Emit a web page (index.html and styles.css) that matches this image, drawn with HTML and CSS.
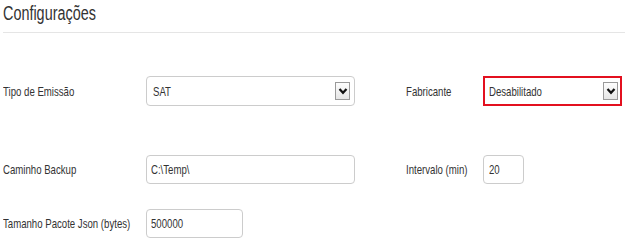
FILE: index.html
```html
<!DOCTYPE html>
<html lang="pt-BR">
<head>
<meta charset="utf-8">
<title>Configurações</title>
<link rel="stylesheet" href="styles.css">
</head>
<body>
<div class="page">
  <h1 class="title"><span class="nt nt-title">Configurações</span></h1>
  <div class="form">
    <div class="row row-1">
      <label class="label"><span class="nt">Tipo de Emissão</span></label>
      <div class="field select w-wide"><span class="value nt">SAT</span><span class="arrow"><svg viewBox="0 0 10 8" width="10" height="8"><path d="M1.5 2 L5 5.8 L8.5 2" fill="none" stroke="#111" stroke-width="2.2"/></svg></span></div>
      <label class="label label-2"><span class="nt">Fabricante</span></label>
      <div class="field select w-fab alert"><span class="value nt">Desabilitado</span><span class="arrow"><svg viewBox="0 0 10 8" width="10" height="8"><path d="M1.5 2 L5 5.8 L8.5 2" fill="none" stroke="#111" stroke-width="2.2"/></svg></span></div>
    </div>
    <div class="row row-2">
      <label class="label"><span class="nt">Caminho Backup</span></label>
      <div class="field input w-wide"><span class="value nt">C:\Temp\</span></div>
      <label class="label label-2"><span class="nt">Intervalo (min)</span></label>
      <div class="field input w-small"><span class="value nt">20</span></div>
    </div>
    <div class="row row-3">
      <label class="label"><span class="nt">Tamanho Pacote Json (bytes)</span></label>
      <div class="field input w-mid"><span class="value nt">500000</span></div>
    </div>
  </div>
</div>
</body>
</html>
```
FILE: styles.css
```css
html, body {
  margin: 0;
  padding: 0;
  background: #fff;
}
.page {
  font-family: "Liberation Sans", Arial, sans-serif;
  color: #333;
  padding: 0 0 0 3px;
}
.nt {
  display: inline-block;
  white-space: nowrap;
  transform: scaleX(0.74);
  transform-origin: left center;
}
.nt-title {
  transform: scaleX(0.72);
}
.title {
  margin: 0;
  padding-top: 2px;
  font-size: 20px;
  font-weight: normal;
  line-height: 22px;
  height: 30px;
  border-bottom: 1px solid #e5e5e5;
  color: #333;
  white-space: nowrap;
}
.form {
  display: flex;
  flex-direction: column;
}
.row {
  display: grid;
  grid-template-columns: 143px 209px 51px 77px 139px;
  align-items: center;
}
.row-1 { margin-top: 43px; height: 30px; }
.row-2 { margin-top: 49px; height: 29px; }
.row-3 { margin-top: 25px; height: 29px; }
.label {
  font-size: 13px;
  color: #333;
  white-space: nowrap;
  min-width: 0;
}
.label-2 {
  grid-column: 4;
}
.field {
  box-sizing: border-box;
  height: 100%;
  border: 1px solid #ccc;
  border-radius: 4px;
  background: #fff;
  display: flex;
  align-items: center;
  font-size: 13px;
  color: #333;
  padding-left: 6px;
  min-width: 0;
}
.input { padding-left: 4px; }
.w-wide { width: 209px; }
.w-small { width: 41px; padding-left: 5px; }
.w-mid { width: 97px; }
.w-fab { width: 139px; }
.select {
  justify-content: space-between;
  padding-right: 4px;
}
.alert {
  border: 2px solid #e3101f;
  border-radius: 0;
  padding-left: 4px;
  padding-right: 2px;
}
.arrow {
  box-sizing: border-box;
  width: 15px;
  height: 18px;
  border: 1px solid #9a9a9a;
  background: linear-gradient(#fdfdfd, #e6e6e6);
  display: flex;
  align-items: center;
  justify-content: center;
  flex: none;
}
.arrow svg { display: block; }
```
